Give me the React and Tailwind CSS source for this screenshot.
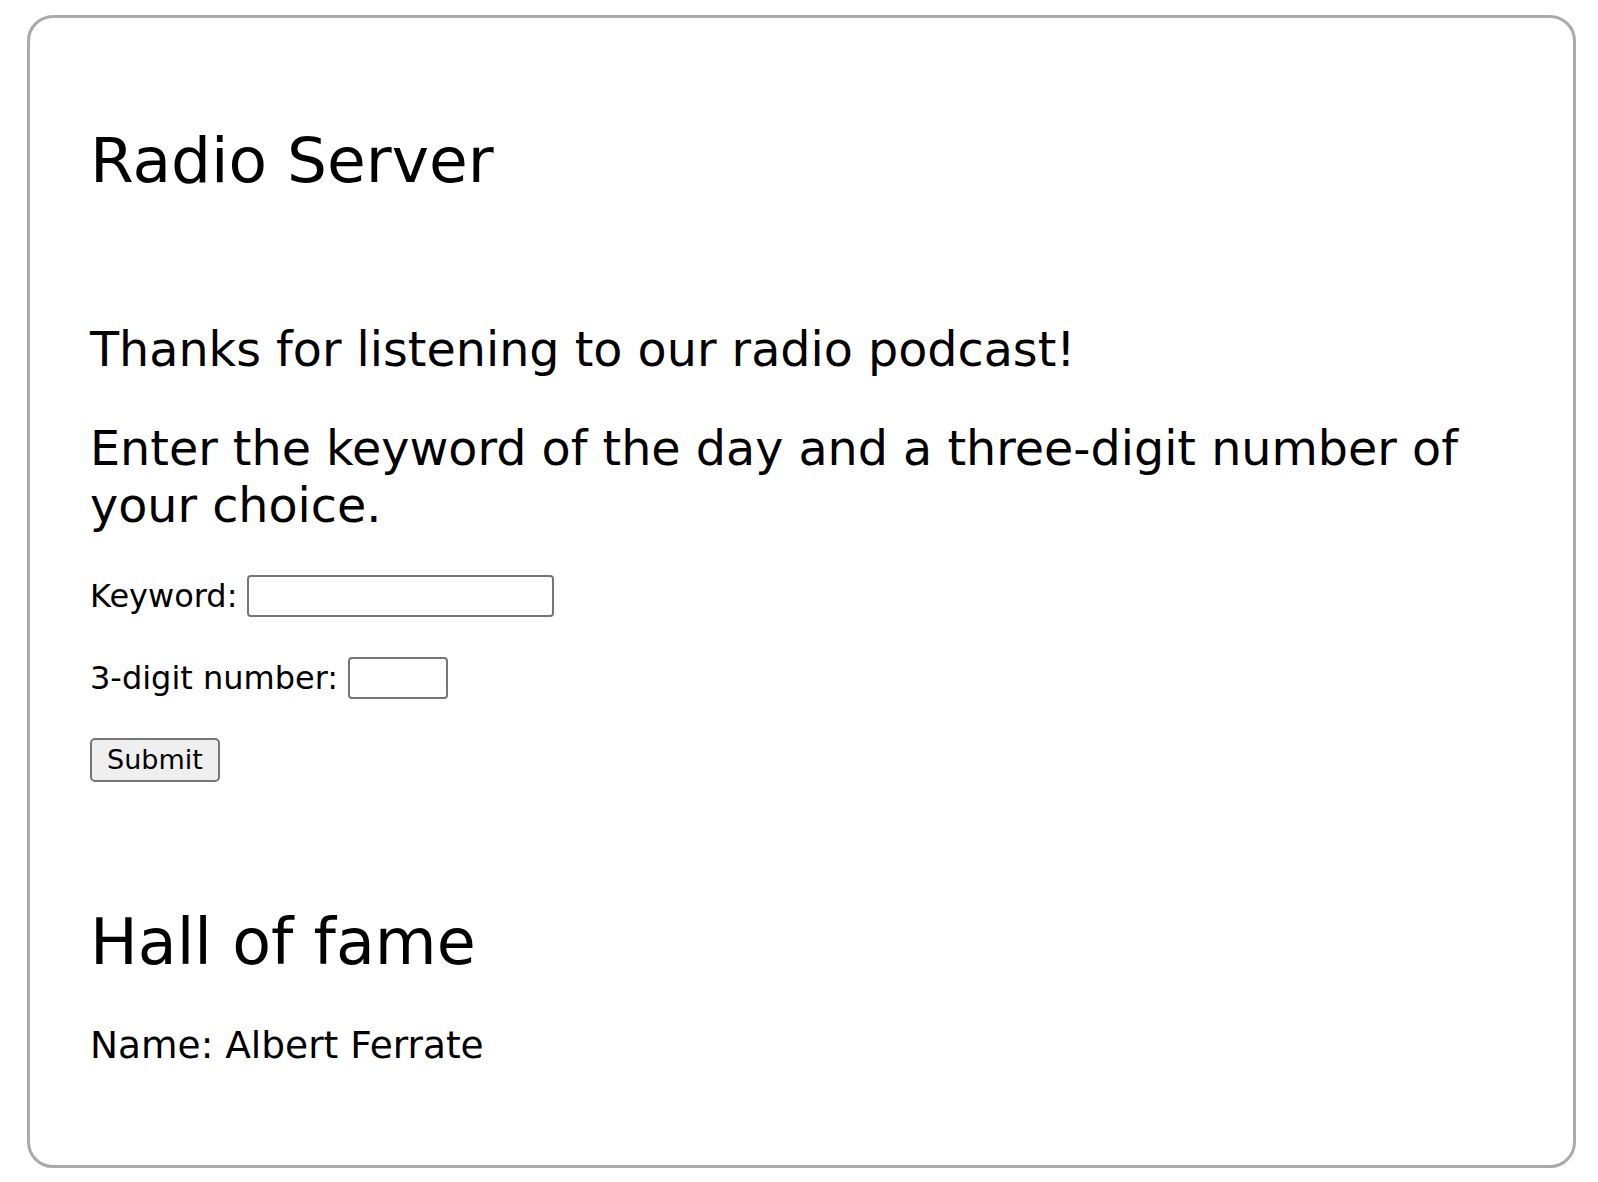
import React from 'react';

const font = { fontFamily: '"DejaVu Sans", sans-serif' };

const App = () => {
  return (
    <div className="bg-white min-h-screen pt-[15px] pl-[27px]" style={font}>
      <div className="w-[1549px] h-[1153px] border-[3px] border-[#aaaaaa] rounded-[26px] pl-[60px] pr-[56px] pt-[104px] text-black">
        <h1 className="text-[63px] leading-[78px] font-normal">Radio Server</h1>

        <p className="mt-[121px] text-[47.6px] leading-[57px]">Thanks for listening to our radio podcast!</p>
        <p className="mt-[42px] text-[47.6px] leading-[57px]">
          Enter the keyword of the day and a three-digit number of your choice.
        </p>

        <form className="mt-[41px] flex flex-col gap-[40px] items-start">
          <div className="flex items-center gap-[10px] h-[42px]">
            <label className="text-[32px] leading-[38px]">Keyword:</label>
            <input type="text" className="w-[307px] h-[42px] border-2 border-[#767676] rounded-[4px] bg-white px-2" />
          </div>
          <div className="flex items-center gap-[10px] h-[42px]">
            <label className="text-[32px] leading-[38px]">3-digit number:</label>
            <input type="text" className="w-[100px] h-[42px] border-2 border-[#767676] rounded-[4px] bg-white px-2" />
          </div>
          <button
            type="submit"
            className="w-[130px] h-[44px] -mt-[1px] bg-[#efefef] border-2 border-[#767676] rounded-[5px] text-[27px] leading-[30px]"
          >
            Submit
          </button>
        </form>

        <h2 className="mt-[121px] text-[63.5px] leading-[78px] font-normal">Hall of fame</h2>
        <p className="mt-[42px] text-[37.5px] leading-[44px]">Name: Albert Ferrate</p>
      </div>
    </div>
  );
};

export default App;
